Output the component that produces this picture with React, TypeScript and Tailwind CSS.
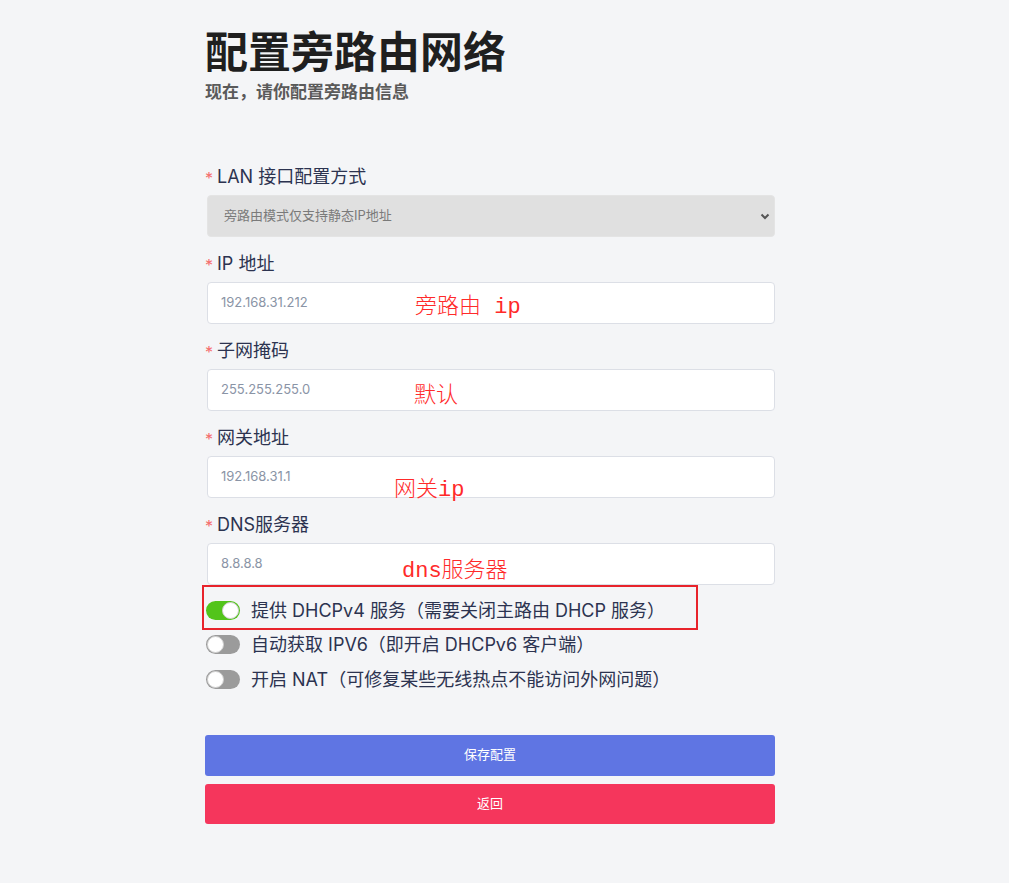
import React, { useState } from 'react';

const font = { fontFamily: 'Inter, "Noto Sans CJK SC", sans-serif' };
const noteFont = { fontFamily: '"Liberation Mono", "Noto Sans CJK SC", monospace' };

const fields = [
  { label: 'IP 地址', value: '192.168.31.212' },
  { label: '子网掩码', value: '255.255.255.0' },
  { label: '网关地址', value: '192.168.31.1' },
  { label: 'DNS服务器', value: '8.8.8.8' },
];

function Label({ text }: { text: string }) {
  return (
    <div className="h-6 flex items-center text-[18px] text-[#2c3350]">
      <span className="text-[#f56c6c] mr-[4px] text-[16px] self-start mt-[2px]">*</span>
      <span>{text}</span>
    </div>
  );
}

function Toggle({ on, onClick }: { on: boolean; onClick: () => void }) {
  return (
    <button
      onClick={onClick}
      className={`relative w-[34px] h-[19px] rounded-full shrink-0 ${on ? 'bg-[#52c41a]' : 'bg-[#9b9b9b]'}`}
    >
      <span
        className={`absolute top-[1px] w-[17px] h-[17px] rounded-full bg-white border border-[#d0d0d0] ${on ? 'right-[1px]' : 'left-[1px]'}`}
      />
    </button>
  );
}

export default function App() {
  const [toggles, setToggles] = useState([true, false, false]);
  const flip = (i: number) => setToggles(t => t.map((v, idx) => (idx === i ? !v : v)));

  const options = [
    '提供 DHCPv4 服务（需要关闭主路由 DHCP 服务）',
    '自动获取 IPV6（即开启 DHCPv6 客户端）',
    '开启 NAT（可修复某些无线热点不能访问外网问题）',
  ];

  return (
    <div className="relative min-h-[883px] bg-[#f4f5f7]" style={font}>
      <div className="pl-[205px] pt-[27px] w-[775px]">
        <h1 className="text-[43px] leading-[50px] font-bold text-[#1f1f1f]">配置旁路由网络</h1>
        <p className="text-[17px] leading-5 font-bold text-[#5a5a5a] mt-[5px]">现在，请你配置旁路由信息</p>

        <div className="mt-[62px] flex flex-col">
          <Label text="LAN 接口配置方式" />
          <div className="mt-[7px] ml-[2px] h-[42px] rounded-[4px] bg-[#e0e0e0] border border-[#e4e4e4] flex items-center justify-between pl-[16px] pr-[3px] text-[13px] text-[#7a7a7a]">
            <span>旁路由模式仅支持静态IP地址</span>
            <svg width="12" height="12" viewBox="0 0 12 12">
              <path d="M2.5 4.5 L6 8 L9.5 4.5" fill="none" stroke="#555" strokeWidth="2" />
            </svg>
          </div>

          {fields.map(f => (
            <div key={f.label} className="mt-[14px]">
              <Label text={f.label} />
              <div className="mt-[7px] ml-[2px] h-[42px] rounded-[4px] bg-white border border-[#dcdfe6] flex items-center pl-[13px] text-[13px] text-[#8a94a6]">
                {f.value}
              </div>
            </div>
          ))}

          <div className="mt-[8px] flex flex-col">
            {options.map((o, i) => (
              <div key={o} className="h-[34.5px] flex items-center gap-[11px] pl-[1px] text-[18px] text-[#2c3350]">
                <Toggle on={toggles[i]} onClick={() => flip(i)} />
                <span>{o}</span>
              </div>
            ))}
          </div>

          <button className="mt-[38px] h-[41px] rounded-[3px] bg-[#5f75e3] text-white text-[13px]">保存配置</button>
          <button className="mt-[8px] h-[40px] rounded-[3px] bg-[#f5365c] text-white text-[13px]">返回</button>
        </div>
      </div>

      {/* red annotations drawn over the form */}
      <div className="absolute left-[202px] top-[585px] w-[496px] h-[45px] border-2 border-[#e8232b] pointer-events-none" />
      <div className="absolute left-[415px] top-[294px] text-[22px] leading-7 font-light text-[#ff2a2a] whitespace-pre" style={noteFont}>旁路由 ip</div>
      <div className="absolute left-[414px] top-[383px] text-[22px] leading-7 font-light text-[#ff2a2a]" style={noteFont}>默认</div>
      <div className="absolute left-[394px] top-[477px] text-[22px] leading-7 font-light text-[#ff2a2a]" style={noteFont}>网关ip</div>
      <div className="absolute left-[402px] top-[558px] text-[22px] leading-7 font-light text-[#ff2a2a]" style={noteFont}>dns服务器</div>
    </div>
  );
}
